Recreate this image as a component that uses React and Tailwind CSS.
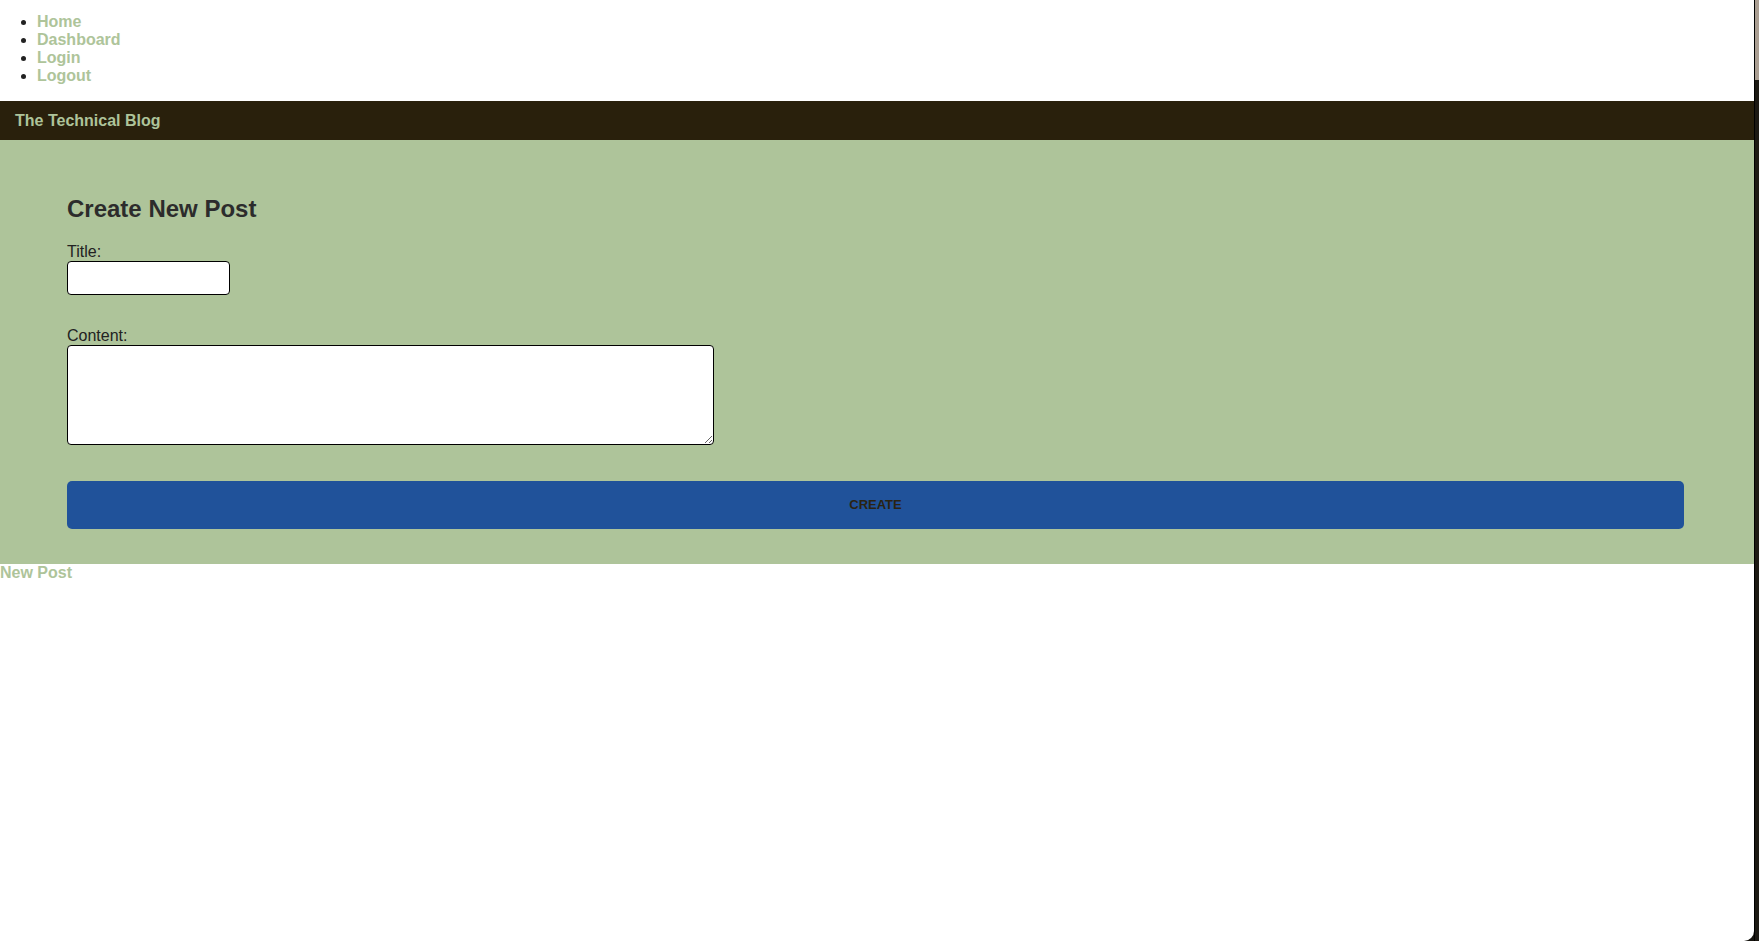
import React from "react";

export default function App() {
  const font = { fontFamily: '"Liberation Sans", Arial, Helvetica, sans-serif' };
  return (
    <div className="flex h-[941px] w-full bg-[#16140f] overflow-hidden" style={font}>
      <div className="flex-1 bg-white rounded-br-[10px] overflow-hidden flex flex-col">
        <ul className="list-disc mt-[13px] mb-[16px] pl-[37px] leading-[18px] text-[16px] text-[#222]">
          <li><a className="font-bold text-[#aec49a]">Home</a></li>
          <li><a className="font-bold text-[#aec49a]">Dashboard</a></li>
          <li><a className="font-bold text-[#aec49a]">Login</a></li>
          <li><a className="font-bold text-[#aec49a]">Logout</a></li>
        </ul>
        <header className="h-[39px] bg-[#29200c] flex items-center pl-[15px]">
          <span className="text-[16px] font-bold text-[#aec49a]">The Technical Blog</span>
        </header>
        <section className="bg-[#aec49a] pt-[55px] pb-[35px] pl-[67px] pr-[70px] flex flex-col">
          <h2 className="text-[24px] leading-[28px] font-bold text-[#2c2c2c]">Create New Post</h2>
          <label className="mt-[20px] text-[16px] leading-[18px] text-[#222]">Title:</label>
          <input
            type="text"
            className="w-[163px] h-[34px] bg-white border border-black rounded-[4px] outline-none px-1"
          />
          <label className="mt-[32px] text-[16px] leading-[18px] text-[#222]">Content:</label>
          <textarea className="w-[647px] h-[100px] bg-white border border-black rounded-[4px] outline-none p-1" />
          <button className="mt-[36px] h-[48px] w-full bg-[#20529a] rounded-[5px] text-[13px] font-bold text-[#2a2312] tracking-normal">
            CREATE
          </button>
        </section>
        <div className="text-[16px] leading-[18px] font-bold text-[#aec49a]">New Post</div>
      </div>
      <div className="w-[5px] flex flex-col border-l border-black">
        <div className="h-[80px] bg-[#ab9f93]" />
        <div className="flex-1 bg-[#1c1913]" />
      </div>
    </div>
  );
}
